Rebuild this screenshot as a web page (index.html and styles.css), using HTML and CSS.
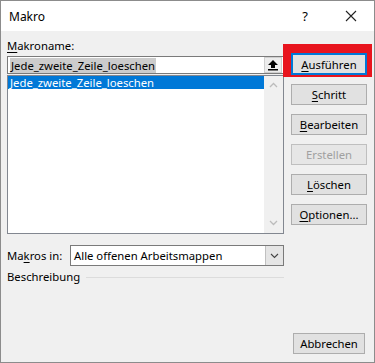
FILE: index.html
```html
<!DOCTYPE html>
<html lang="de">

<head>
    <meta charset="UTF-8">
    <title>Makro</title>
    <link rel="stylesheet" href="styles.css">
</head>

<body>
    <div class="window">
        <div class="titlebar">
            <span class="title">Makro</span>
            <span class="help">?</span>
            <span class="close">
                <svg width="12" height="12" viewBox="0 0 12 12"><path d="M1 1 L11 11 M11 1 L1 11" stroke="#222" stroke-width="1.1" fill="none"/></svg>
            </span>
        </div>
        <div class="content">
            <div class="left">
                <div class="label"><u>M</u>akroname:</div>
                <div class="name-box">
                    <span class="name-text"><span class="sel">Jede_zweite_Zeile_loeschen</span></span>
                    <span class="up-btn">
                        <svg width="12" height="12" viewBox="0 0 12 12"><path d="M6 1 L11 6 L8 6 L8 9 L4 9 L4 6 L1 6 Z" fill="#000"/><rect x="1" y="10" width="10" height="1.5" fill="#000"/></svg>
                    </span>
                </div>
                <div class="listbox">
                    <div class="items">
                        <div class="item active">Jede_zweite_Zeile_loeschen</div>
                    </div>
                    <div class="scrollbar">
                        <svg width="9" height="6" viewBox="0 0 9 6"><path d="M1 5 L4.5 1.5 L8 5" stroke="#bcbcbc" stroke-width="1.3" fill="none"/></svg>
                        <svg width="9" height="6" viewBox="0 0 9 6"><path d="M1 1 L4.5 4.5 L8 1" stroke="#bcbcbc" stroke-width="1.3" fill="none"/></svg>
                    </div>
                </div>
                <div class="macros-in">
                    <span class="label">Ma<u>k</u>ros in:</span>
                    <div class="select">
                        <span class="select-text">Alle offenen Arbeitsmappen</span>
                        <span class="select-arrow">
                            <svg width="9" height="6" viewBox="0 0 9 6"><path d="M1 1 L4.5 4.5 L8 1" stroke="#444" stroke-width="1.1" fill="none"/></svg>
                        </span>
                    </div>
                </div>
                <div class="desc">
                    <span>Beschreibung</span>
                    <span class="desc-line"></span>
                </div>
            </div>
            <div class="right">
                <div class="buttons">
                    <button class="btn default"><u>A</u>usführen</button>
                    <button class="btn"><u>S</u>chritt</button>
                    <button class="btn"><u>B</u>earbeiten</button>
                    <button class="btn disabled">Erstellen</button>
                    <button class="btn"><u>L</u>öschen</button>
                    <button class="btn"><u>O</u>ptionen...</button>
                </div>
                <button class="btn cancel">Abbrechen</button>
            </div>
            <div class="highlight"></div>
        </div>
    </div>
</body>

</html>
```

FILE: styles.css
```css
* {
    box-sizing: border-box;
}

body {
    margin: 0;
    font-family: 'Noto Sans', 'Open Sans', sans-serif;
    font-size: 11.3px;
    color: #000;
    background: #f0f0f0;
}

u {
    text-decoration: underline;
    text-underline-offset: 2px;
}

.window {
    width: 375px;
    height: 363px;
    border: 1px solid #8c8c8c;
    background: #f0f0f0;
    display: flex;
    flex-direction: column;
}

.titlebar {
    height: 30px;
    background: #ffffff;
    display: flex;
    align-items: center;
    padding-left: 8px;
}

.title {
    flex: 1;
    font-size: 12px;
}

.help {
    width: 46px;
    text-align: center;
    font-size: 13px;
}

.close {
    width: 46px;
    display: flex;
    justify-content: center;
}

.content {
    flex: 1;
    position: relative;
    display: flex;
    padding: 0 0 0 6px;
}

.left {
    width: 277px;
    display: flex;
    flex-direction: column;
}

.left > .label {
    margin-top: 6px;
    line-height: 17px;
}

.name-box {
    margin-top: 2px;
    height: 18px;
    border: 1px solid #7a7a7a;
    background: #ffffff;
    display: flex;
    align-items: center;
}

.name-text {
    flex: 1;
    padding-left: 2px;
    line-height: 15px;
}

.sel {
    background: #cccccc;
    padding: 0 1px;
}

.up-btn {
    width: 18px;
    height: 16px;
    margin-right: 1px;
    background: #ececec;
    border: 1px solid #cfcfcf;
    display: flex;
    align-items: center;
    justify-content: center;
}

.listbox {
    margin-top: 1px;
    height: 159px;
    border: 1px solid #828790;
    background: #ffffff;
    display: flex;
}

.items {
    flex: 1;
}

.item {
    line-height: 13px;
    padding-left: 2px;
}

.item.active {
    background: #0078d7;
    color: #ffffff;
}

.scrollbar {
    width: 19px;
    background: #f0f0f0;
    display: flex;
    flex-direction: column;
    justify-content: space-between;
    align-items: center;
    padding: 6px 0 7px;
}

.macros-in {
    margin-top: 11px;
    display: flex;
    align-items: center;
}

.macros-in .label {
    width: 63px;
}

.select {
    flex: 1;
    height: 21px;
    border: 1px solid #7a7a7a;
    background: #ffffff;
    display: flex;
    align-items: center;
}

.select-text {
    flex: 1;
    padding-left: 3px;
}

.select-arrow {
    width: 18px;
    height: 19px;
    background: #e5e5e5;
    border-left: 1px solid #c0c0c0;
    display: flex;
    align-items: center;
    justify-content: center;
}

.desc {
    margin-top: 2px;
    display: flex;
    align-items: center;
    gap: 6px;
    line-height: 18px;
}

.desc-line {
    flex: 1;
    height: 1px;
    background: #dcdcdc;
}

.right {
    flex: 1;
    display: flex;
    flex-direction: column;
    align-items: flex-start;
    padding-left: 7px;
}

.buttons {
    margin-top: 22px;
    display: flex;
    flex-direction: column;
    gap: 9px;
}

.btn {
    position: relative;
    z-index: 1;
    width: 76px;
    height: 21px;
    padding: 0;
    font-family: inherit;
    font-size: 11.3px;
    color: #000;
    background: #e1e1e1;
    border: 1px solid #adadad;
}

.btn.default {
    height: 22px;
    border: 2px solid #0078d7;
}

.btn.disabled {
    color: #a0a0a0;
    border-color: #bfbfbf;
    background: #e6e6e6;
}

.btn.cancel {
    margin-top: auto;
    margin-bottom: 8px;
    margin-left: 2px;
    width: 72px;
}

.highlight {
    position: absolute;
    left: 282px;
    top: 13px;
    width: 89px;
    height: 33px;
    background: #e8141e;
}
```
